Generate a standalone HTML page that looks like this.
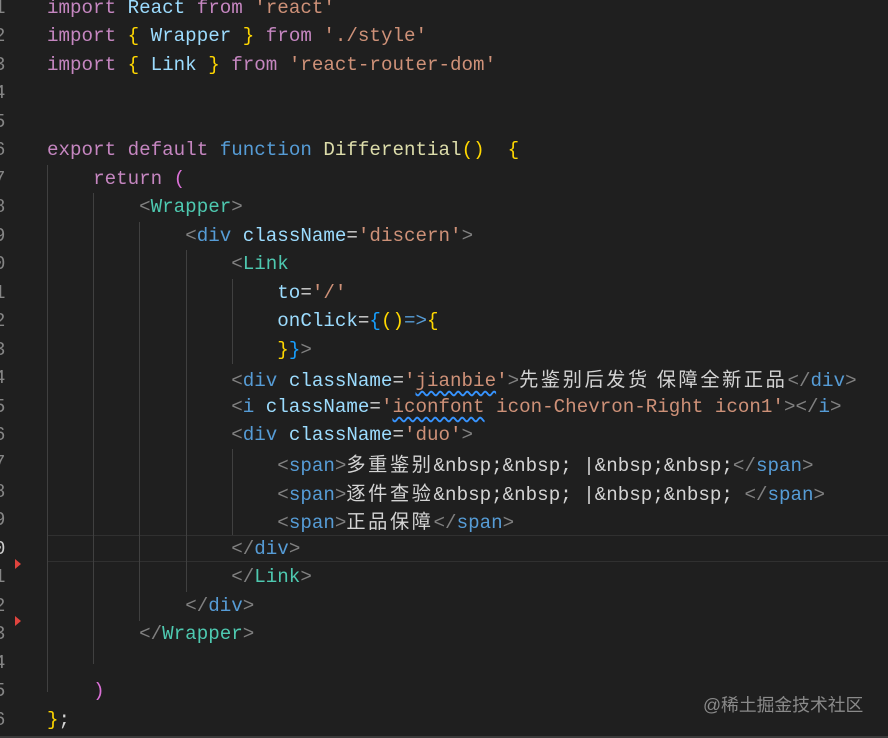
<!DOCTYPE html>
<html><head><meta charset="utf-8"><style>
html,body{margin:0;padding:0;}
body{width:888px;height:738px;background:#1f1f1f;overflow:hidden;position:relative;font-family:"Liberation Mono","Noto Sans CJK SC",monospace;font-size:19.2px;}
.l{position:absolute;left:47px;height:28.48px;line-height:28.48px;white-space:pre;color:#d4d4d4;}
.n{position:absolute;left:-6px;height:28.48px;line-height:28.48px;color:#858585;font-size:19px;}
.g{position:absolute;width:1px;background:#404040;}
.k{color:#c586c0}.b{color:#9cdcfe}.s{color:#ce9178}.f{color:#dcdcaa}.y{color:#ffd700}.p{color:#da70d6}.bl{color:#179fff}
.t{color:#808080}.tn{color:#569cd6}.c{color:#4ec9b0}.kw{color:#569cd6}
.cj{letter-spacing:2.6px;font-family:"Noto Sans CJK SC",sans-serif;}
.w{text-decoration:underline wavy #3794ff;text-underline-offset:4px;}
</style></head><body>
<div style="position:absolute;left:48px;top:535px;width:840px;height:25px;border-top:1px solid #303030;border-bottom:1px solid #303030;"></div>
<div class="g" style="left:47px;top:165px;height:527px"></div>
<div class="g" style="left:93px;top:193px;height:471px"></div>
<div class="g" style="left:139px;top:222px;height:399px"></div>
<div class="g" style="left:186px;top:250px;height:342px"></div>
<div class="g" style="left:232px;top:279px;height:85px"></div>
<div class="g" style="left:232px;top:449px;height:86px"></div>
<div style="position:absolute;left:15px;top:559px;width:0;height:0;border-left:6px solid #e0443e;border-top:5px solid transparent;border-bottom:5px solid transparent"></div>
<div style="position:absolute;left:15px;top:616px;width:0;height:0;border-left:6px solid #e0443e;border-top:5px solid transparent;border-bottom:5px solid transparent"></div>

<div class="n" style="top:-6px">1</div><div class="n" style="top:22px">2</div><div class="n" style="top:51px">3</div><div class="n" style="top:79px">4</div><div class="n" style="top:108px">5</div><div class="n" style="top:136px">6</div><div class="n" style="top:165px">7</div><div class="n" style="top:193px">8</div><div class="n" style="top:222px">9</div><div class="n" style="top:250px">0</div><div class="n" style="top:279px">1</div><div class="n" style="top:307px">2</div><div class="n" style="top:336px">3</div><div class="n" style="top:364px">4</div><div class="n" style="top:393px">5</div><div class="n" style="top:421px">6</div><div class="n" style="top:449px">7</div><div class="n" style="top:478px">8</div><div class="n" style="top:506px">9</div><div class="n" style="top:535px;color:#ccc">0</div><div class="n" style="top:563px">1</div><div class="n" style="top:592px">2</div><div class="n" style="top:620px">3</div><div class="n" style="top:649px">4</div><div class="n" style="top:677px">5</div><div class="n" style="top:706px">6</div>

<div class="l" style="top:-6px"><span class="k">import</span> <span class="b">React</span> <span class="k">from</span> <span class="s">'react'</span></div>
<div class="l" style="top:22px"><span class="k">import</span> <span class="y">{</span> <span class="b">Wrapper</span> <span class="y">}</span> <span class="k">from</span> <span class="s">'./style'</span></div>
<div class="l" style="top:51px"><span class="k">import</span> <span class="y">{</span> <span class="b">Link</span> <span class="y">}</span> <span class="k">from</span> <span class="s">'react-router-dom'</span></div>
<div class="l" style="top:136px"><span class="k">export</span> <span class="k">default</span> <span class="kw">function</span> <span class="f">Differential</span><span class="y">()</span>  <span class="y">{</span></div>
<div class="l" style="top:165px">    <span class="k">return</span> <span class="p">(</span></div>
<div class="l" style="top:193px">        <span class="t">&lt;</span><span class="c">Wrapper</span><span class="t">&gt;</span></div>
<div class="l" style="top:222px">            <span class="t">&lt;</span><span class="tn">div</span> <span class="b">className</span>=<span class="s">'discern'</span><span class="t">&gt;</span></div>
<div class="l" style="top:250px">                <span class="t">&lt;</span><span class="c">Link</span></div>
<div class="l" style="top:279px">                    <span class="b">to</span>=<span class="s">'/'</span></div>
<div class="l" style="top:307px">                    <span class="b">onClick</span>=<span class="bl">{</span><span class="y">()</span><span class="kw">=&gt;</span><span class="y">{</span></div>
<div class="l" style="top:336px">                    <span class="y">}</span><span class="bl">}</span><span class="t">&gt;</span></div>
<div class="l" style="top:364px">                <span class="t">&lt;</span><span class="tn">div</span> <span class="b">className</span>=<span class="s">'<span class="w">jianbie</span>'</span><span class="t">&gt;</span><span class="cj">先鉴别后发货 保障全新正品</span><span class="t">&lt;/</span><span class="tn">div</span><span class="t">&gt;</span></div>
<div class="l" style="top:393px">                <span class="t">&lt;</span><span class="tn">i</span> <span class="b">className</span>=<span class="s">'<span class="w">iconfont</span> icon-Chevron-Right icon1'</span><span class="t">&gt;&lt;/</span><span class="tn">i</span><span class="t">&gt;</span></div>
<div class="l" style="top:421px">                <span class="t">&lt;</span><span class="tn">div</span> <span class="b">className</span>=<span class="s">'duo'</span><span class="t">&gt;</span></div>
<div class="l" style="top:449px">                    <span class="t">&lt;</span><span class="tn">span</span><span class="t">&gt;</span><span class="cj">多重鉴别</span>&amp;nbsp;&amp;nbsp; |&amp;nbsp;&amp;nbsp;<span class="t">&lt;/</span><span class="tn">span</span><span class="t">&gt;</span></div>
<div class="l" style="top:478px">                    <span class="t">&lt;</span><span class="tn">span</span><span class="t">&gt;</span><span class="cj">逐件查验</span>&amp;nbsp;&amp;nbsp; |&amp;nbsp;&amp;nbsp; <span class="t">&lt;/</span><span class="tn">span</span><span class="t">&gt;</span></div>
<div class="l" style="top:506px">                    <span class="t">&lt;</span><span class="tn">span</span><span class="t">&gt;</span><span class="cj">正品保障</span><span class="t">&lt;/</span><span class="tn">span</span><span class="t">&gt;</span></div>
<div class="l" style="top:535px">                <span class="t">&lt;/</span><span class="tn">div</span><span class="t">&gt;</span></div>
<div class="l" style="top:563px">                <span class="t">&lt;/</span><span class="c">Link</span><span class="t">&gt;</span></div>
<div class="l" style="top:592px">            <span class="t">&lt;/</span><span class="tn">div</span><span class="t">&gt;</span></div>
<div class="l" style="top:620px">        <span class="t">&lt;/</span><span class="c">Wrapper</span><span class="t">&gt;</span></div>
<div class="l" style="top:677px">    <span class="p">)</span></div>
<div class="l" style="top:706px"><span class="y">}</span>;</div>
<div style="position:absolute;left:703px;top:693px;color:#8a8a8a;font-family:'Liberation Sans','Noto Sans CJK SC',sans-serif;font-size:17.8px;line-height:24px;">@稀土掘金技术社区</div>
<div style="position:absolute;left:0;top:736px;width:888px;height:2px;background:#3a3a3a"></div>
</body></html>
